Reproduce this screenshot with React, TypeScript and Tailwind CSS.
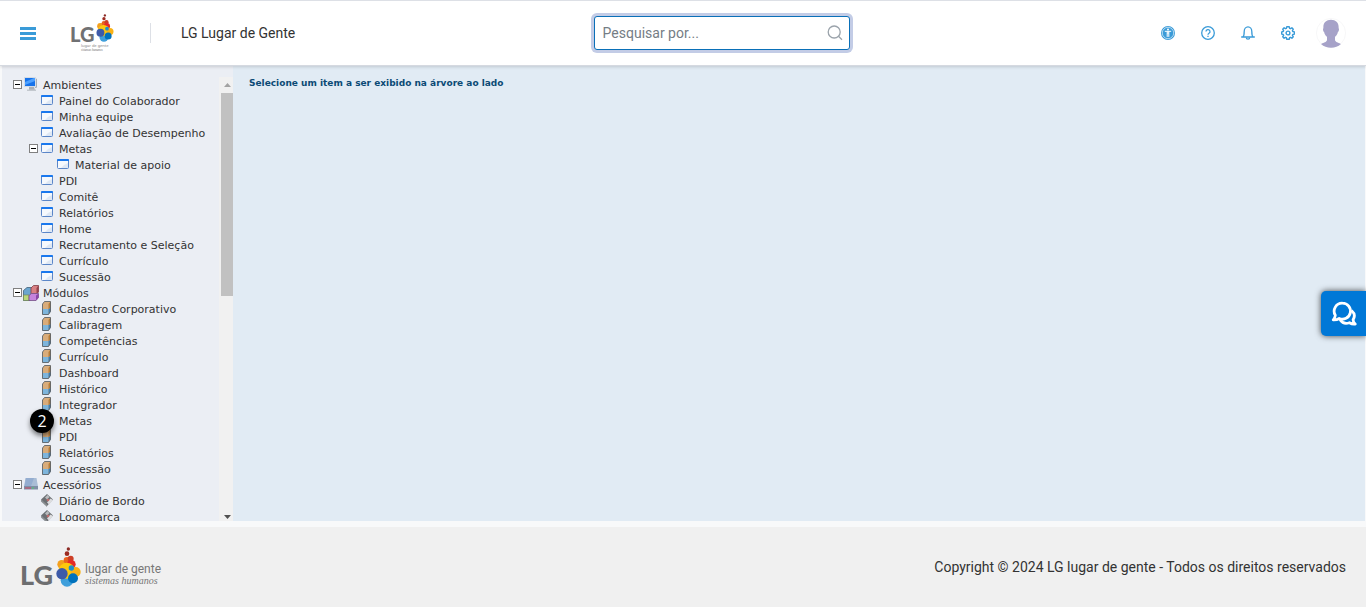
import clsx from "clsx";

type IconName = "computer" | "window" | "blocks" | "module" | "drive" | "tool";

interface TreeItem {
  label: string;
  icon: IconName;
  level: number;
  expanded?: boolean;
  step?: number;
}

const windows = (labels: string[]): TreeItem[] =>
  labels.map((label) => ({ label, icon: "window", level: 1 }));

const modules = (labels: string[]): TreeItem[] =>
  labels.map((label) => ({ label, icon: "module", level: 1 }));

const items: TreeItem[] = [
  { label: "Ambientes", icon: "computer", level: 0, expanded: true },
  ...windows(["Painel do Colaborador", "Minha equipe", "Avaliação de Desempenho"]),
  { label: "Metas", icon: "window", level: 1, expanded: true },
  { label: "Material de apoio", icon: "window", level: 2 },
  ...windows(["PDI", "Comitê", "Relatórios", "Home", "Recrutamento e Seleção", "Currículo", "Sucessão"]),
  { label: "Módulos", icon: "blocks", level: 0, expanded: true },
  ...modules([
    "Cadastro Corporativo",
    "Calibragem",
    "Competências",
    "Currículo",
    "Dashboard",
    "Histórico",
    "Integrador",
  ]),
  { label: "Metas", icon: "module", level: 1, step: 2 },
  ...modules(["PDI", "Relatórios", "Sucessão"]),
  { label: "Acessórios", icon: "drive", level: 0, expanded: true },
  { label: "Diário de Bordo", icon: "tool", level: 1 },
  { label: "Logomarca", icon: "tool", level: 1 },
];

const indent = ["pl-[11px]", "pl-[27px]", "pl-[43px]"];

function TreeIcon({ name }: { name: IconName }) {
  return (
    <svg viewBox="0 0 16 16" className="h-4 w-4 shrink-0" aria-hidden="true">
      {name === "computer" && (
        <>
          <path d="M6 10h5l1 3H6z" fill="#a9b0b8" />
          <path d="M4 12.500h9v1.500H4z" fill="#c3c8ce" />
          <path d="M12 1l2 1v8.500L12 11z" fill="#a4adb8" />
          <rect x="1" y="0" width="12" height="10" fill="#d3dbe5" />
          <rect x="2" y="1" width="10" height="8" fill="#1672ea" />
          <path d="M2 8V5L11 1h1v3z" fill="#4ea1ff" />
        </>
      )}
      {name === "window" && (
        <>
          <rect x="2.500" y="2.500" width="11" height="9" rx="1" fill="#f6f9fd" stroke="#5b86c8" />
          <path d="M2 3a1 1 0 0 1 1-1h10a1 1 0 0 1 1 1v1H2z" fill="#1a78ee" />
          <path d="M9 8l4-2v5H6z" fill="#dfe8f4" />
        </>
      )}
      {name === "blocks" && (
        <>
          <path d="M.5 5.500L4 2.500h5v7l-2 6H.5z" fill="#6aa5cf" stroke="#42627a" strokeWidth=".8" />
          <path d="M.5 10H6v5.500H.5z" fill="#b9d67a" stroke="#6f8050" strokeWidth=".6" />
          <path d="M8 3L10.500.5h5V7L13.500 9H8z" fill="#d88084" stroke="#7d3e45" strokeWidth=".8" />
          <path d="M13.500 3l2-2.500V7l-2 2z" fill="#96424c" />
          <path d="M6 10.500L8.500 8.500h7v4l-2.500 3H6z" fill="#c583dc" stroke="#765087" strokeWidth=".8" />
          <path d="M13 10.500l2.500-2v4l-2.500 3z" fill="#8b46a8" />
        </>
      )}
      {name === "module" && (
        <>
          <path d="M3.500 3L5.500.5h6v10l-2 3h-6z" fill="#d9ac7a" />
          <path d="M3.500 8h6v5.500h-6z" fill="#7db5dc" />
          <path d="M9.500 3l2-2.500V7l-2 1z" fill="#b77d38" />
          <path d="M9.500 8l2-1v3.500l-2 3z" fill="#3c7db2" />
          <path d="M3.500 3L5.500.5h6v10l-2 3h-6z" fill="none" stroke="#4f5860" strokeWidth=".8" />
        </>
      )}
      {name === "drive" && (
        <>
          <path d="M2.500 1h11L15 9.500H1z" fill="#a9bdd6" />
          <path d="M3 1h8l-3 8H1.500z" fill="#94add0" />
          <path d="M1 9h14v3.500H1z" fill="#7f8fa6" />
          <path d="M2 10.500h6v1H2z" fill="#d3465f" />
          <path d="M9 10.500h2v1H9z" fill="#4fd06a" />
        </>
      )}
      {name === "tool" && (
        <>
          <path d="M2 6.500L8 1l6 5.500-6 6.500z" fill="#6c7074" />
          <path d="M2 6.500l6 5V14L2 8.500z" fill="#8b8f92" />
          <path d="M6 4.500L8.500 2l2 2L8 6.500z" fill="#b9bcbf" />
          <path d="M8 9.500l3.500-4L14 7l-4 4.500z" fill="#dcdddf" />
          <path d="M7.500 7L9 5.500 10.500 7 9 8.500z" fill="#c96b6b" />
        </>
      )}
    </svg>
  );
}

function TreeRow({ item }: { item: TreeItem }) {
  return (
    <li className={clsx("relative flex h-4 items-center", indent[item.level])}>
      {item.expanded ? (
        <button
          type="button"
          aria-label={`Recolher ${item.label}`}
          className="mr-px mb-px flex h-[9px] w-[9px] shrink-0 items-center justify-center border border-[#808080] bg-white"
        >
          <span className="h-px w-[5px] bg-black" />
        </button>
      ) : (
        <span className="w-[10px] shrink-0" />
      )}
      <TreeIcon name={item.icon} />
      <a href="#" className="ml-1 pt-[2px] leading-4 whitespace-nowrap">
        {item.label}
      </a>
      {item.step && (
        <span className="absolute left-7 -top-1 z-10 flex h-6 w-6 items-center justify-center rounded-full bg-black font-['Open_Sans',sans-serif] text-base text-white shadow-[0_3px_5px_rgba(0,0,0,0.5)]">
          {item.step}
        </span>
      )}
    </li>
  );
}

function Bubbles({ className }: { className: string }) {
  return (
    <svg viewBox="166 109 75 120" className={className} aria-hidden="true">
      <circle cx="203" cy="115" r="5" fill="#8c2a24" />
      <circle cx="199" cy="129" r="7" fill="#9c2b22" />
      <circle cx="183" cy="161" r="13" fill="#f4a01e" />
      <circle cx="199" cy="149" r="10" fill="#ea641f" />
      <circle cx="210" cy="144" r="9" fill="#cd3f27" />
      <circle cx="212" cy="161" r="13" fill="#e62a26" />
      <circle cx="199" cy="209" r="19" fill="#3f9fdb" />
      <circle cx="198" cy="180" r="24" fill="#fdc90d" />
      <circle cx="225" cy="184" r="15" fill="#f9b216" />
      <circle cx="212" cy="172" r="8" fill="#1e8fca" />
      <circle cx="184" cy="189" r="17" fill="#3d5ba9" />
      <circle cx="217" cy="203" r="15" fill="#0072bc" />
    </svg>
  );
}

const iconButton = "flex h-10 w-10 items-center justify-center text-[#3a9bd8]";

function Header() {
  return (
    <header className="relative z-10 flex h-[66px] shrink-0 items-center border-t border-b border-t-[#dde0e6] border-b-[#d5d9e0] bg-white pr-5 shadow-[0_1px_3px_rgba(0,0,0,0.15)]">
      <div className="flex w-[44.1%] items-center pl-5">
        <button type="button" aria-label="Menu" className="flex w-4 flex-col gap-[2px]">
          <span className="h-[3px] bg-[#3a9bd8]" />
          <span className="h-[3px] bg-[#3a9bd8]" />
          <span className="h-[3px] bg-[#3a9bd8]" />
        </button>
        <a href="#" className="ml-[34px] flex w-[46px] flex-col">
          <span className="flex items-end">
            <span className="font-['Lato',sans-serif] text-[20px] leading-4 font-black text-[#707173]">LG</span>
            <Bubbles className="ml-px h-7 w-[18px] shrink-0" />
          </span>
          <span className="ml-[11px] mt-px whitespace-nowrap font-['Noto_Sans',sans-serif] text-[4px] leading-[5px] text-[#888]">
            lugar de gente
          </span>
          <span className="ml-[11px] whitespace-nowrap font-['Liberation_Serif',serif] text-[3px] leading-[4px] text-[#666] italic">
            sistemas humanos
          </span>
        </a>
        <span className="ml-[34px] h-5 w-px bg-[#dde0e6]" />
        <h1 className="ml-[30px] text-sm text-[#333]">LG Lugar de Gente</h1>
      </div>
      <label className="relative flex w-64 items-center">
        <input
          type="text"
          aria-label="Pesquisar"
          placeholder="Pesquisar por..."
          className="h-[34px] w-full rounded-[3px] border border-[#0a70b8] bg-white pr-9 pl-2 text-sm text-[#333] shadow-[0_0_0_3px_#c3cce6] outline-none placeholder:text-[#757d85]"
        />
        <svg viewBox="0 0 16 16" className="absolute right-[7px] h-4 w-4" fill="none" stroke="#9ba3ab" strokeWidth="1.300" aria-hidden="true">
          <circle cx="7.200" cy="7" r="6" />
          <path d="M11.500 11.300l3.500 3.500" />
        </svg>
      </label>
      <nav className="ml-auto flex items-center">
        <button type="button" aria-label="Acessibilidade" className={iconButton}>
          <svg viewBox="0 0 14 14" className="h-[14px] w-[14px]">
            <circle cx="7" cy="7" r="7" fill="currentColor" />
            <circle cx="7" cy="7" r="5.700" fill="none" stroke="#fff" strokeWidth=".6" />
            <circle cx="7" cy="3.600" r="1" fill="#fff" />
            <path d="M3.800 5.300h6.400M7 5.300v2.700M6.200 5.300v5.600M7.800 5.300v5.600" stroke="#fff" strokeWidth="1" />
          </svg>
        </button>
        <button type="button" aria-label="Ajuda" className={iconButton}>
          <svg viewBox="0 0 14 14" className="h-[14px] w-[14px]" fill="none" stroke="currentColor" strokeWidth="1.300">
            <circle cx="7" cy="7" r="6.300" />
            <path d="M5 5.600a2 2 0 1 1 3 1.700c-.7.400-1 .7-1 1.500" />
            <path d="M7 9.800v1.300" />
          </svg>
        </button>
        <button type="button" aria-label="Notificações" className={iconButton}>
          <svg viewBox="0 0 14 14" className="h-[14px] w-[14px]" fill="none" stroke="currentColor" strokeWidth="1.300">
            <path d="M.2 11h13.600M2 11c1-1 1.200-2 1.200-5.400a3.800 4.800 0 0 1 7.600 0C10.800 9 11 10 12 11" />
            <path d="M5.300 11.600a1.700 1.600 0 0 0 3.400 0" />
          </svg>
        </button>
        <button type="button" aria-label="Configurações" className={iconButton}>
          <svg viewBox="0 0 14 14" className="h-[14px] w-[14px]" fill="none" stroke="currentColor" strokeWidth="1.400" strokeLinejoin="round">
            <path d="M5.800.7h2.400l.4 1.600.9.400 1.400-.9 1.400 1.400-.9 1.400.4.900 1.600.4v2.200l-1.600.4-.4.900.9 1.400-1.400 1.400-1.400-.9-.9.400-.4 1.600H5.800l-.4-1.600-.9-.4-1.400.9-1.400-1.400.9-1.400-.4-.9L.7 8.100V5.900l1.500-.4.4-.9-.9-1.400 1.400-1.400 1.400.9.900-.4z" />
            <circle cx="7" cy="7" r="1.900" />
          </svg>
        </button>
        <button type="button" aria-label="Perfil" className="ml-2 h-[30px] w-[30px]">
          <svg viewBox="0 0 30 30" className="h-full w-full">
            <circle cx="15" cy="15" r="14.600" fill="#fff" stroke="#f1f1f4" strokeWidth=".6" />
            <path
              d="M15 1.800c-5 0-8 3.200-7.600 8.200-.8 1.200-.3 3.600.8 4.200.4 2 1.300 3.400 2.800 4.600v3.400C10 24.500 6.500 24.800 5 26a15 15 0 0 0 20 0c-1.500-1.200-5-1.500-6-3.800v-3.400c1.500-1.200 2.400-2.600 2.800-4.600 1.100-.6 1.600-3 .8-4.200.4-5-2.600-8.200-7.600-8.200z"
              fill="#a6a2c8"
            />
          </svg>
        </button>
      </nav>
    </header>
  );
}

function ScrollBar() {
  return (
    <div className="flex w-[14px] shrink-0 flex-col bg-[#f1f1f1] pl-[2px]" aria-hidden="true">
      <svg viewBox="0 0 12 16" className="h-4 w-3 shrink-0">
        <path d="M3 10l3.500-4 3.500 4z" fill="#a3a3a3" />
      </svg>
      <div className="h-[203px] bg-[#c1c1c1]" />
      <svg viewBox="0 0 12 16" className="mt-auto h-4 w-3 shrink-0">
        <path d="M3 10h7l-3.500 4z" fill="#505050" />
      </svg>
    </div>
  );
}

export default function App() {
  return (
    <div className="flex h-screen flex-col overflow-hidden bg-[#f8f9fa] font-['Roboto','Open_Sans',sans-serif]">
      <Header />
      <main className="relative flex min-h-0 flex-1 px-[2px] pr-px font-['DejaVu_Sans',sans-serif] text-[11px]">
        <aside className="flex w-[231px] shrink-0 overflow-hidden bg-[#ebeef4] pt-[11px]">
          <ul className="min-w-0 flex-1 text-[#333]">
            {items.map((item, i) => (
              <TreeRow key={i} item={item} />
            ))}
          </ul>
          <ScrollBar />
        </aside>
        <section className="flex-1 bg-[#e1ebf4] px-4 pt-2">
          <p className="text-[9px] leading-[18px] font-bold text-[#0b4a75]">
            Selecione um item a ser exibido na árvore ao lado
          </p>
        </section>
        <button
          type="button"
          aria-label="Abrir chat"
          className="absolute top-[225px] right-0 flex h-[45px] w-[45px] items-center justify-center rounded-l-[5px] bg-[#0078d7] shadow-[0_0_6px_rgba(0,0,0,0.7)]"
        >
          <svg viewBox="0 0 26 26" className="h-[26px] w-[26px]" fill="none" stroke="#fff" strokeWidth="2.800" strokeLinejoin="round">
            <path d="M11.500 2.200a8 8 0 1 1-3.300 15.300c-1.800 1.200-3.800 1.500-6 1.400 1.600-1.500 2-2.700 2.100-4.600A8 8 0 0 1 11.500 2.200z" />
            <path d="M20.500 9.500c3 2.600 3.600 6 1.600 9.200 0 1.800.6 3 2.100 4.300-2.200.2-4-.2-5.800-1.300-3.600 1.400-7 .5-9.400-2.900" />
          </svg>
        </button>
      </main>
      <footer className="mt-[6px] flex h-20 shrink-0 items-center justify-between bg-[#f0f0f0] px-5">
        <a href="#" className="flex items-end">
          <span className="font-['Lato',sans-serif] text-[27px] leading-6 font-black text-[#6d6e70]">LG</span>
          <Bubbles className="ml-[3px] h-10 w-[25px]" />
          <span className="ml-1 flex flex-col text-[#777]">
            <span className="text-xs leading-3">lugar de gente</span>
            <span className="font-['Liberation_Serif',serif] text-[10px] leading-3 italic">sistemas humanos</span>
          </span>
        </a>
        <p className="text-sm text-[#333]">Copyright © 2024 LG lugar de gente - Todos os direitos reservados</p>
      </footer>
    </div>
  );
}
